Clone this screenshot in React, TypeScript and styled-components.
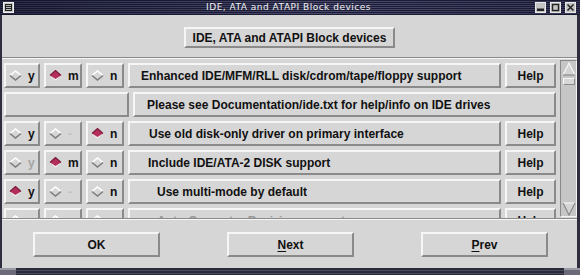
import React from 'react';
import styled, { createGlobalStyle, css } from 'styled-components';

const Global = createGlobalStyle`
  html, body { margin: 0; padding: 0; background: #d6d6d6; }
  body { font-family: "Liberation Sans", Arial, sans-serif; }
`;

const raised = css`
  border: 2px solid;
  border-color: #f6f6f6 #8a8a8a #8a8a8a #f6f6f6;
`;

const Window = styled.div`
  width: 580px;
  height: 275px;
  display: flex;
  flex-direction: column;
  background: #d6d6d6;
  overflow: hidden;
`;

const TitleBar = styled.div`
  height: 15px;
  flex: none;
  display: flex;
  align-items: center;
  padding: 0 4px 0 3px;
  background:
    linear-gradient(to right, rgba(10, 10, 30, 0.6), rgba(10, 10, 30, 0.25) 55%, rgba(10, 10, 30, 0.45)),
    repeating-linear-gradient(to bottom, #24243e 0 1px, #5e5e88 1px 2px);
`;

const TitleText = styled.div`
  flex: 1;
  text-align: center;
  color: #f2f2f2;
  font-family: "DejaVu Sans", sans-serif;
  font-size: 9px;
  letter-spacing: 0.5px;
  line-height: 15px;
  padding-left: 28px;
`;

const TitleButtons = styled.div`
  display: flex;
  gap: 4px;
`;

const TitleIcon = styled.svg`
  display: block;
  width: 11px;
  height: 11px;
`;

const Body = styled.div`
  flex: 1;
  display: flex;
  flex-direction: column;
  border-left: 2px solid #2e2e3e;
  border-right: 3px solid #2e2e3e;
  min-height: 0;
`;

const Header = styled.div`
  height: 42px;
  flex: none;
  display: flex;
  justify-content: center;
  align-items: flex-start;
  padding-top: 12px;
  box-sizing: border-box;
`;

const HeaderButton = styled.div`
  ${raised};
  width: 211px;
  height: 21px;
  box-sizing: border-box;
  display: flex;
  align-items: center;
  justify-content: center;
  font-weight: bold;
  font-size: 12px;
  color: #111;
`;

const Groove = styled.div`
  height: 2px;
  flex: none;
  border-top: 1px solid #8a8a8a;
  border-bottom: 1px solid #f6f6f6;
  box-sizing: border-box;
`;

const ListArea = styled.div`
  height: 159px;
  flex: none;
  display: flex;
  padding: 1px 0 0 2px;
  box-sizing: border-box;
  gap: 4px;
`;

const Viewport = styled.div`
  flex: 1;
  overflow: hidden;
  padding-top: 3px;
  display: flex;
  flex-direction: column;
  gap: 4px;
`;

const Row = styled.div`
  display: grid;
  grid-template-columns: 36px 38px 38px 1fr 51px;
  gap: 4px;
  height: 25px;
  flex: none;
`;

const InfoRow = styled.div`
  display: grid;
  grid-template-columns: 125px 1fr;
  gap: 4px;
  height: 25px;
  flex: none;
`;

const Cell = styled.div`
  ${raised};
  box-sizing: border-box;
  display: flex;
  align-items: center;
  font-weight: bold;
  font-size: 12px;
  color: #111;
  min-width: 0;
  white-space: nowrap;
  overflow: hidden;
`;

const ToggleCell = styled(Cell)`
  padding-left: 3px;
  gap: 6px;
`;

const ToggleLabel = styled.span<{ $state: 'on' | 'dim' | 'off' }>`
  color: ${(p) => (p.$state === 'dim' ? '#a4a4a4' : p.$state === 'off' ? '#c2c2c2' : '#111')};
`;

const Label = styled(Cell)<{ $indent: number; $faint?: boolean }>`
  padding-left: ${(p) => p.$indent}px;
  color: ${(p) => (p.$faint ? '#9a9a9a' : '#111')};
`;

const HelpButton = styled(Cell)`
  justify-content: center;
`;

const DiamondSvg = styled.svg`
  display: block;
  width: 13px;
  height: 11px;
  flex: none;
`;

const ScrollBar = styled.div`
  width: 17px;
  height: 157px;
  flex: none;
  box-sizing: border-box;
  background: #c6c6c6;
  border: 1px solid;
  border-color: #8a8a8a #f2f2f2 #f2f2f2 #8a8a8a;
  display: flex;
  flex-direction: column;
  align-items: center;
  padding-top: 1px;
`;

const ArrowSvg = styled.svg`
  display: block;
  width: 14px;
  height: 14px;
  flex: none;
`;

const Thumb = styled.div`
  width: 12px;
  height: 7px;
  margin-top: 2px;
  box-sizing: border-box;
  background: #d8d8d8;
  border: 1px solid;
  border-color: #f6f6f6 #8a8a8a #8a8a8a #f6f6f6;
`;

const Trough = styled.div`
  flex: 1;
`;

const ButtonBar = styled.div`
  height: 48px;
  flex: none;
  display: flex;
  justify-content: space-between;
  align-items: flex-start;
  padding: 12px 29px 0 31px;
  box-sizing: border-box;
`;

const BigButton = styled.div`
  ${raised};
  width: 127px;
  height: 25px;
  box-sizing: border-box;
  display: flex;
  align-items: center;
  justify-content: center;
  font-weight: bold;
  font-size: 12px;
  color: #111;
`;

const Mnemonic = styled.span`
  text-decoration: underline;
  text-underline-offset: 2px;
`;

const BottomFrame = styled.div`
  height: 7px;
  flex: none;
  display: flex;
  background: repeating-linear-gradient(to bottom, #2a2a3a 0 2px, #4a4a5e 2px 3px);
`;

const Grip = styled.div`
  width: 16px;
  border-top: 2px solid #9a9aa6;
  background: #6a6a78;
`;

const Spacer = styled.div`
  flex: 1;
`;

type Sel = 'y' | 'm' | 'n' | 'none';
type LabelState = 'on' | 'dim' | 'off';

function Diamond({ on }: { on: boolean }) {
  return (
    <DiamondSvg viewBox="0 0 13 11">
      {on ? (
        <>
          <polygon points="6.5,0.5 12.5,5.5 6.5,10.5 0.5,5.5" fill="#f4f4f4" />
          <polygon points="6.5,0.5 12,5.5 6.5,9 1,5.5" fill="#b3305c" />
          <polyline points="1,5.5 6.5,0.5 12,5.5" fill="none" stroke="#7a1a3c" strokeWidth="1.2" />
        </>
      ) : (
        <>
          <polyline points="1,5.5 6.5,1 12,5.5" fill="none" stroke="#ffffff" strokeWidth="1.6" />
          <polyline points="1,5.5 6.5,10 12,5.5" fill="none" stroke="#7e7e7e" strokeWidth="1.6" />
        </>
      )}
    </DiamondSvg>
  );
}

function Toggle({ letter, on, state }: { letter: string; on: boolean; state: LabelState }) {
  return (
    <ToggleCell>
      <Diamond on={on} />
      <ToggleLabel $state={state}>{letter}</ToggleLabel>
    </ToggleCell>
  );
}

type Opt = {
  sel: Sel;
  text: string;
  indent: number;
  y: LabelState;
  m: LabelState;
  n: LabelState;
  faint?: boolean;
};

const first: Opt = {
  sel: 'm',
  text: 'Enhanced IDE/MFM/RLL disk/cdrom/tape/floppy support',
  indent: 11,
  y: 'on',
  m: 'on',
  n: 'on',
};

const rest: Opt[] = [
  { sel: 'n', text: 'Use old disk-only driver on primary interface', indent: 19, y: 'on', m: 'off', n: 'on' },
  { sel: 'm', text: 'Include IDE/ATA-2 DISK support', indent: 18, y: 'dim', m: 'on', n: 'on' },
  { sel: 'y', text: 'Use multi-mode by default', indent: 27, y: 'on', m: 'off', n: 'on' },
  {
    sel: 'none',
    text: 'Auto-Geometry Resizing support',
    indent: 27,
    y: 'off',
    m: 'off',
    n: 'off',
    faint: true,
  },
];

function OptionRow({ o }: { o: Opt }) {
  return (
    <Row>
      <Toggle letter="y" on={o.sel === 'y'} state={o.y} />
      <Toggle letter={o.m === 'off' ? '-' : 'm'} on={o.sel === 'm'} state={o.m} />
      <Toggle letter="n" on={o.sel === 'n'} state={o.n} />
      <Label $indent={o.indent} $faint={o.faint}>
        {o.text}
      </Label>
      <HelpButton>Help</HelpButton>
    </Row>
  );
}

export default function App() {
  return (
    <>
      <Global />
      <Window>
        <TitleBar>
          <TitleIcon viewBox="0 0 11 11">
            <rect x="0.5" y="0.5" width="10" height="10" fill="#c8c8c8" stroke="#f0f0f0" />
            <rect x="2.5" y="2.5" width="6" height="6" fill="#b8b8b8" stroke="#222" />
            <line x1="3" y1="4.5" x2="8" y2="4.5" stroke="#222" />
            <line x1="3" y1="6.5" x2="8" y2="6.5" stroke="#222" />
          </TitleIcon>
          <TitleText>IDE, ATA and ATAPI Block devices</TitleText>
          <TitleButtons>
            <TitleIcon viewBox="0 0 11 11">
              <rect x="0.5" y="0.5" width="10" height="10" fill="#c4c4c4" stroke="#e8e8e8" />
              <rect x="2" y="6.5" width="7" height="2.5" fill="#222" />
            </TitleIcon>
            <TitleIcon viewBox="0 0 11 11">
              <rect x="0.5" y="0.5" width="10" height="10" fill="#c4c4c4" stroke="#e8e8e8" />
              <rect x="2.5" y="2.5" width="6" height="6" fill="none" stroke="#222" strokeWidth="1.4" />
            </TitleIcon>
            <TitleIcon viewBox="0 0 11 11">
              <rect x="0.5" y="0.5" width="10" height="10" fill="#c4c4c4" stroke="#e8e8e8" />
              <path d="M2.5 2.5 L8.5 8.5 M8.5 2.5 L2.5 8.5" stroke="#222" strokeWidth="1.5" />
            </TitleIcon>
          </TitleButtons>
        </TitleBar>
        <Body>
          <Header>
            <HeaderButton>IDE, ATA and ATAPI Block devices</HeaderButton>
          </Header>
          <Groove />
          <ListArea>
            <Viewport>
              <OptionRow o={first} />
              <InfoRow>
                <Cell />
                <Label $indent={12}>Please see Documentation/ide.txt for help/info on IDE drives</Label>
              </InfoRow>
              {rest.map((o) => (
                <OptionRow key={o.text} o={o} />
              ))}
            </Viewport>
            <ScrollBar>
              <ArrowSvg viewBox="0 0 14 14">
                <polygon points="7,1 13,13 1,13" fill="#d4d4d4" />
                <polyline points="1,13 7,1 13,13" fill="none" stroke="#f6f6f6" strokeWidth="1.2" />
                <line x1="1" y1="13" x2="13" y2="13" stroke="#8a8a8a" strokeWidth="1.2" />
              </ArrowSvg>
              <Thumb />
              <Trough />
              <ArrowSvg viewBox="0 0 14 14">
                <polygon points="1,1 13,1 7,13" fill="#d4d4d4" />
                <line x1="1" y1="1" x2="13" y2="1" stroke="#f6f6f6" strokeWidth="1.2" />
                <polyline points="1,1 7,13 13,1" fill="none" stroke="#8a8a8a" strokeWidth="1.2" />
              </ArrowSvg>
            </ScrollBar>
          </ListArea>
          <Groove />
          <ButtonBar>
            <BigButton>OK</BigButton>
            <BigButton>
              <Mnemonic>N</Mnemonic>ext
            </BigButton>
            <BigButton>
              <Mnemonic>P</Mnemonic>rev
            </BigButton>
          </ButtonBar>
        </Body>
        <BottomFrame>
          <Grip />
          <Spacer />
          <Grip />
        </BottomFrame>
      </Window>
    </>
  );
}
